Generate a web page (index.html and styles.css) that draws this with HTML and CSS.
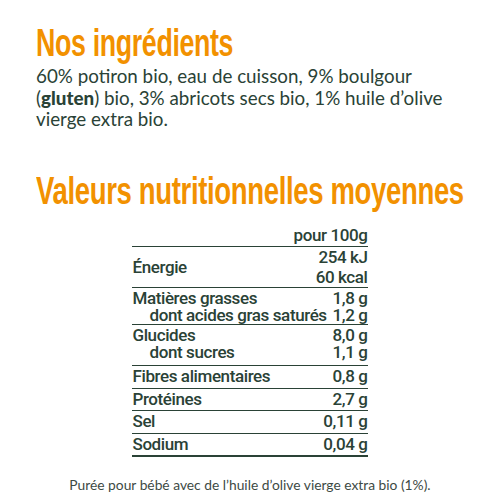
FILE: index.html
```html
<!DOCTYPE html>
<html lang="fr">
<head>
    <meta charset="UTF-8">
    <meta name="viewport" content="width=device-width, initial-scale=1.0">
    <title>Nos ingrédients</title>
    <link rel="stylesheet" href="styles.css">
</head>
<body>
    <section class="ingredients">
        <h1 class="title">Nos ingrédients</h1>
        <p class="ingredients-text">60% potiron bio, eau de cuisson, 9% boulgour (<b>gluten</b>) bio, 3% abricots secs bio, 1% huile d’olive vierge extra bio.</p>
    </section>

    <section class="nutrition">
        <h2 class="title title-wide">Valeurs nutritionnelles moyennes</h2>

        <table class="nutri-table">
            <colgroup>
                <col class="col-label">
                <col class="col-val">
            </colgroup>
            <thead>
                <tr>
                    <th class="val" colspan="2">pour 100g</th>
                </tr>
            </thead>
            <tbody>
                <tr class="energy">
                    <td>Énergie</td>
                    <td class="val">254 kJ<br>60 kcal</td>
                </tr>
                <tr class="double first">
                    <td>Matières grasses<br><span class="sub">dont acides gras saturés</span></td>
                    <td class="val">1,8 g<br>1,2 g</td>
                </tr>
                <tr class="double">
                    <td>Glucides<br><span class="sub">dont sucres</span></td>
                    <td class="val">8,0 g<br>1,1 g</td>
                </tr>
                <tr>
                    <td>Fibres alimentaires</td>
                    <td class="val">0,8 g</td>
                </tr>
                <tr>
                    <td>Protéines</td>
                    <td class="val">2,7 g</td>
                </tr>
                <tr>
                    <td>Sel</td>
                    <td class="val">0,11 g</td>
                </tr>
                <tr class="last">
                    <td>Sodium</td>
                    <td class="val">0,04 g</td>
                </tr>
            </tbody>
        </table>

        <p class="note">Purée pour bébé avec de l’huile d’olive vierge extra bio (1%).</p>
    </section>
</body>
</html>
```

FILE: styles.css
```css
body {
    margin: 0;
    background-color: #fff;
    color: #2a4236; /* vert foncé */
    font-family: Lato, "Open Sans", sans-serif;
    overflow-x: hidden;
}

.ingredients {
    padding: 24px 0 0 36px;
}

/* titres orange étroits */
.title {
    display: inline-block;
    margin: 0;
    white-space: nowrap;
    font-family: "Liberation Sans", sans-serif;
    font-weight: bold;
    font-size: 38px;
    line-height: 38px;
    color: #f29100;
    letter-spacing: -0.5px;
    transform: scaleX(0.705);
    transform-origin: left center;
}

.ingredients-text {
    margin: 0;
    padding-top: 3px;
    width: 425px;
    font-size: 18.8px;
    line-height: 21.5px;
}

.ingredients-text b {
    font-weight: 900;
}

.nutrition {
    padding: 42px 0 0 0;
}

.title-wide {
    margin-left: 36px;
    transform: scaleX(0.725);
}

.nutri-table {
    margin: 16px auto 0;
    width: 235px;
    table-layout: fixed;
    border-collapse: collapse;
    font-family: Roboto, "Liberation Sans", sans-serif;
    font-weight: 500;
    font-size: 17px;
    letter-spacing: -0.4px;
    color: #2a4236;
}

.col-label {
    width: 180px;
}

.col-val {
    width: 55px;
}

.nutri-table th,
.nutri-table td {
    padding: 1px 0 1.5px;
    line-height: 19px;
    text-align: left;
    white-space: nowrap;
}

.nutri-table th {
    border-bottom: 1.5px solid #2a4236;
    padding: 0 0 1px;
    font-weight: 500;
}

.nutri-table td {
    border-bottom: 1.5px solid #2a4236;
}

.nutri-table .val {
    text-align: right;
}

.nutri-table .energy td {
    padding: 0;
    line-height: 20px;
}

.nutri-table .double td {
    line-height: 17px;
    padding: 2px 0 4px;
}

.nutri-table .double.first td {
    padding: 2.5px 0 0;
}

.nutri-table .sub {
    padding-left: 17px;
}

.nutri-table .last td {
    border-bottom-width: 2.5px;
}

.note {
    margin: 19px 0 0;
    text-align: center;
    font-size: 13.8px;
    color: #3d4a44;
}
```
